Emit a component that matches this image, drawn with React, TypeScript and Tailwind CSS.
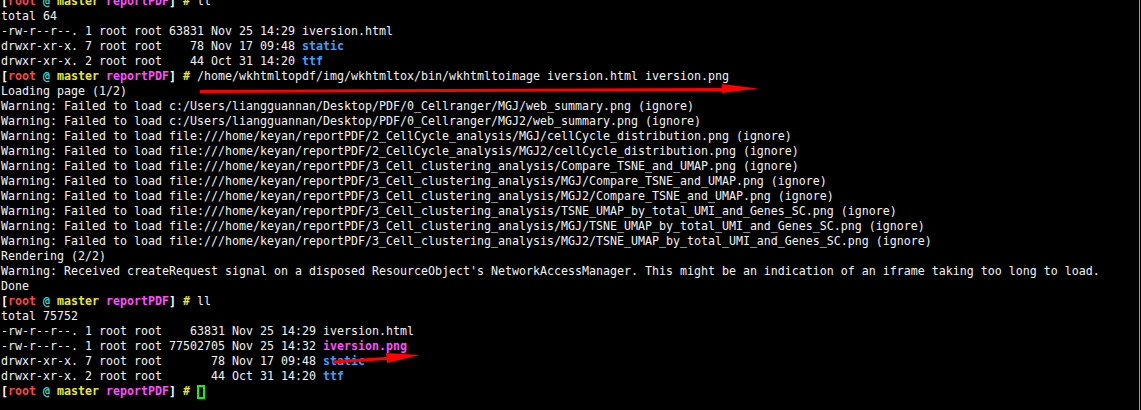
import React from "react";

type Seg = { t: string; c?: string; b?: boolean };

const W = "text-[#f2f2f2]";

function Prompt({ cmd, cursor }: { cmd?: string; cursor?: boolean }) {
  return (
    <div className="flex whitespace-pre">
      <span className="font-bold text-white">[</span>
      <span className="font-bold text-[#ff4545]">root</span>
      <span className="font-bold text-white"> </span>
      <span className="font-bold text-[#2fd6d6]">@</span>
      <span className="font-bold text-white"> </span>
      <span className="font-bold text-[#e8e82a]">master</span>
      <span className="font-bold text-white"> </span>
      <span className="font-bold text-[#ff4dff]">reportPDF</span>
      <span className="font-bold text-white">]</span>
      <span className="font-bold text-white"> </span>
      <span className="font-bold text-[#e8e82a]">#</span>
      <span className={W}> {cmd}</span>
      {cursor && <span className="mt-[1px] h-[14px] w-[8px] border-2 border-[#00ff00]" />}
    </div>
  );
}

function Line({ segs }: { segs: Seg[] }) {
  return (
    <div className="whitespace-pre">
      {segs.map((s, i) => (
        <span key={i} className={`${s.c ?? W} ${s.b ? "font-bold" : ""}`}>
          {s.t}
        </span>
      ))}
    </div>
  );
}

const warn = (p: string) => `Warning: Failed to load ${p} (ignore)`;

export default function App() {
  return (
    <div className="relative h-[410px] w-[1141px] overflow-hidden bg-black">
      <div
        className="-mt-[6px] flex flex-col text-[11.63px] leading-[15px] pl-px"
        style={{ fontFamily: '"DejaVu Sans Mono", monospace' }}
      >
        <Prompt cmd="ll" />
        <Line segs={[{ t: "total 64" }]} />
        <Line segs={[{ t: "-rw-r--r--. 1 root root 63831 Nov 25 14:29 iversion.html" }]} />
        <Line segs={[{ t: "drwxr-xr-x. 7 root root    78 Nov 17 09:48 " }, { t: "static", c: "text-[#3aa0ff]", b: true }]} />
        <Line segs={[{ t: "drwxr-xr-x. 2 root root    44 Oct 31 14:20 " }, { t: "ttf", c: "text-[#3aa0ff]", b: true }]} />
        <Prompt cmd="/home/wkhtmltopdf/img/wkhtmltox/bin/wkhtmltoimage iversion.html iversion.png" />
        <Line segs={[{ t: "Loading page (1/2)" }]} />
        <Line segs={[{ t: warn("c:/Users/liangguannan/Desktop/PDF/0_Cellranger/MGJ/web_summary.png") }]} />
        <Line segs={[{ t: warn("c:/Users/liangguannan/Desktop/PDF/0_Cellranger/MGJ2/web_summary.png") }]} />
        <Line segs={[{ t: warn("file:///home/keyan/reportPDF/2_CellCycle_analysis/MGJ/cellCycle_distribution.png") }]} />
        <Line segs={[{ t: warn("file:///home/keyan/reportPDF/2_CellCycle_analysis/MGJ2/cellCycle_distribution.png") }]} />
        <Line segs={[{ t: warn("file:///home/keyan/reportPDF/3_Cell_clustering_analysis/Compare_TSNE_and_UMAP.png") }]} />
        <Line segs={[{ t: warn("file:///home/keyan/reportPDF/3_Cell_clustering_analysis/MGJ/Compare_TSNE_and_UMAP.png") }]} />
        <Line segs={[{ t: warn("file:///home/keyan/reportPDF/3_Cell_clustering_analysis/MGJ2/Compare_TSNE_and_UMAP.png") }]} />
        <Line segs={[{ t: warn("file:///home/keyan/reportPDF/3_Cell_clustering_analysis/TSNE_UMAP_by_total_UMI_and_Genes_SC.png") }]} />
        <Line segs={[{ t: warn("file:///home/keyan/reportPDF/3_Cell_clustering_analysis/MGJ/TSNE_UMAP_by_total_UMI_and_Genes_SC.png") }]} />
        <Line segs={[{ t: warn("file:///home/keyan/reportPDF/3_Cell_clustering_analysis/MGJ2/TSNE_UMAP_by_total_UMI_and_Genes_SC.png") }]} />
        <Line segs={[{ t: "Rendering (2/2)" }]} />
        <Line segs={[{ t: "Warning: Received createRequest signal on a disposed ResourceObject's NetworkAccessManager. This might be an indication of an iframe taking too long to load." }]} />
        <Line segs={[{ t: "Done" }]} />
        <Prompt cmd="ll" />
        <Line segs={[{ t: "total 75752" }]} />
        <Line segs={[{ t: "-rw-r--r--. 1 root root    63831 Nov 25 14:29 iversion.html" }]} />
        <Line segs={[{ t: "-rw-r--r--. 1 root root 77502705 Nov 25 14:32 " }, { t: "iversion.png", c: "text-[#ff4dff]", b: true }]} />
        <Line segs={[{ t: "drwxr-xr-x. 7 root root       78 Nov 17 09:48 " }, { t: "static", c: "text-[#3aa0ff]", b: true }]} />
        <Line segs={[{ t: "drwxr-xr-x. 2 root root       44 Oct 31 14:20 " }, { t: "ttf", c: "text-[#3aa0ff]", b: true }]} />
        <Prompt cmd="" cursor />
      </div>

      {/* hand-drawn red arrows over the output */}
      <svg className="absolute left-0 top-0" width="1141" height="410">
        <path d="M200 91.5 L724 89.5" stroke="#ff0000" strokeWidth="3" />
        <path d="M722 84 L758 88.5 L722 93 Z" fill="#ff0000" />
        <path d="M333 362 L400 357.5" stroke="#ff0000" strokeWidth="3" />
        <path d="M386 353 L420 355 L387 363 Z" fill="#ff0000" />
      </svg>

      <div className="absolute right-[1px] top-0 h-full w-px bg-[#9a9a9a]" />
    </div>
  );
}
